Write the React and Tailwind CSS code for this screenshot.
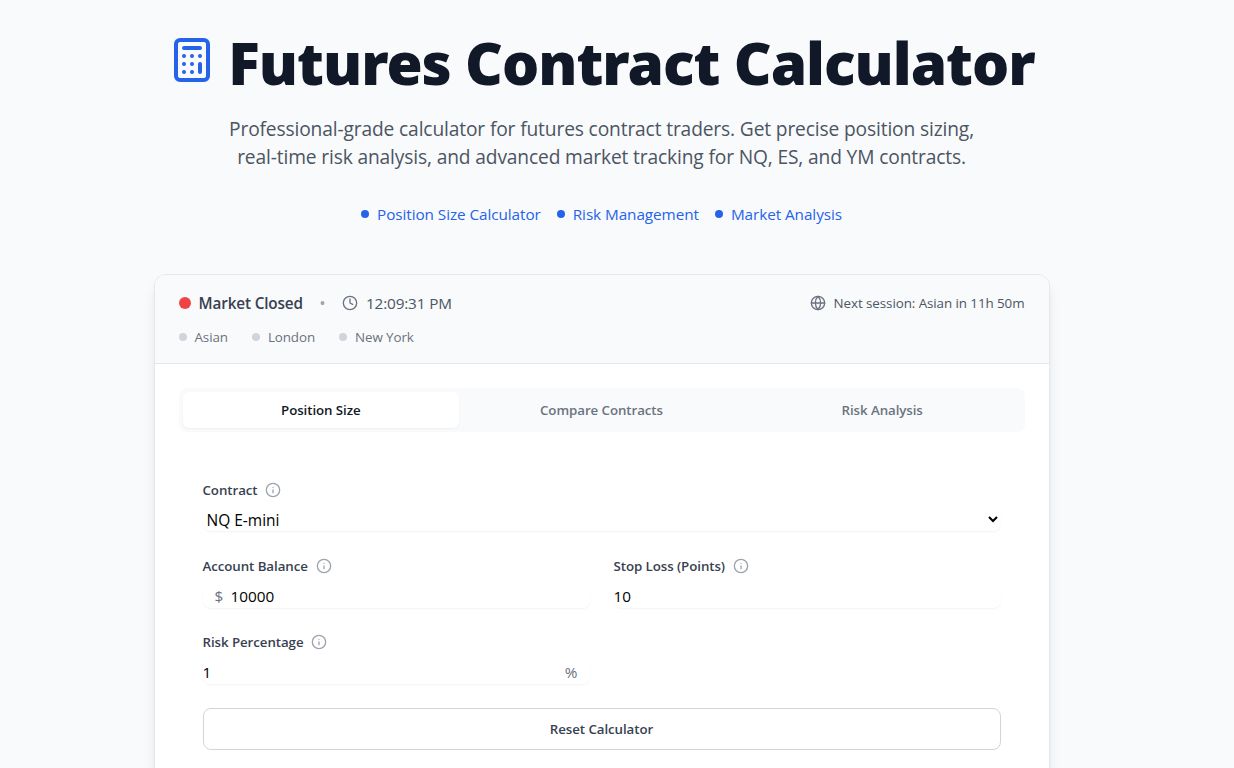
import { useState } from "react";
import { Calculator, Clock, Globe, Info } from "lucide-react";

const features = ["Position Size Calculator", "Risk Management", "Market Analysis"];
const sessions = ["Asian", "London", "New York"];
const tabs = ["Position Size", "Compare Contracts", "Risk Analysis"];
const contracts = ["NQ E-mini", "ES E-mini", "YM E-mini"];

const defaults = { contract: "NQ E-mini", balance: "10000", stopLoss: "10", risk: "1" };

function Field({ id, label, children }) {
  return (
    <div>
      <label
        htmlFor={id}
        className="mb-2 flex h-5 items-center text-[13.3px] leading-5 font-semibold tracking-[-0.07px] text-[#374151]"
      >
        {label}
        <Info className="ml-[7.8px] h-4 w-4 text-[#9ca3af]" />
      </label>
      {children}
    </div>
  );
}

export default function App() {
  const [activeTab, setActiveTab] = useState(tabs[0]);
  const [form, setForm] = useState(defaults);

  const update = (key) => (e) => setForm({ ...form, [key]: e.target.value });

  return (
    <div className="h-screen overflow-hidden bg-[#f9fafb] pr-[31px] font-['Open_Sans','Noto_Sans',sans-serif]">
      <header className="pt-8 text-center">
        <h1 className="flex h-[67px] items-start justify-center font-['Noto_Sans','Open_Sans',sans-serif] text-[58.5px] leading-[61px] font-black tracking-[-1px] whitespace-nowrap text-[#111827]">
          <Calculator className="mt-1 mr-3 h-12 w-12 text-[#2563eb]" />
          Futures Contract Calculator
        </h1>
        <p className="mx-auto mt-4 w-[768px] text-[19.2px] leading-7 tracking-[-0.14px] text-[#4b5563]">
          Professional-grade calculator for futures contract traders. Get precise position sizing,
          real-time risk analysis, and advanced market tracking for NQ, ES, and YM contracts.
        </p>
        <div className="mt-[31px] flex justify-center gap-4 text-[15.3px] leading-6 tracking-[-0.07px] text-[#2563eb]">
          {features.map((name) => (
            <span key={name} className="flex items-center gap-2">
              <span className="h-2 w-2 rounded-full bg-[#2563eb]" />
              {name}
            </span>
          ))}
        </div>
      </header>

      <main className="mx-auto mt-12 h-[640px] w-[896px] overflow-hidden rounded-xl border border-[#e5e7eb] bg-white shadow-lg">
        <div className="border-b border-[#e5e7eb] bg-[#f9fafb] px-6 py-4">
          <div className="flex h-6 items-center justify-between">
            <div className="flex items-center gap-4 text-[15.3px] leading-6 tracking-[-0.14px]">
              <div className="flex items-center gap-2">
                <span className="h-3 w-3 rounded-full bg-[#ef4444]" />
                <span className="font-semibold text-[#374151]">Market Closed</span>
              </div>
              <span className="w-[7px] text-center text-[17px] text-[#9ca3af]">•</span>
              <div className="flex items-center gap-2 text-[#4b5563]">
                <Clock className="h-4 w-4 text-[#6b7280]" />
                {"12:09:31 PM"}
              </div>
            </div>
            <div className="flex items-center gap-2 text-[13.4px] leading-5 tracking-[-0.08px] text-[#4b5563]">
              <Globe className="h-4 w-4 text-[#6b7280]" />
              Next session: Asian in 11h 50m
            </div>
          </div>
          <div className="mt-3 flex items-center gap-6 text-[13.4px] leading-5 tracking-[-0.1px] text-[#6b7280]">
            {sessions.map((name) => (
              <span key={name} className="flex items-center gap-2">
                <span className="h-2 w-2 rounded-full bg-[#d1d5db]" />
                {name}
              </span>
            ))}
          </div>
        </div>

        <div className="p-6">
          <div className="grid grid-cols-3 gap-1 rounded-lg bg-[#f9fafb] p-1">
            {tabs.map((tab) => (
              <button
                key={tab}
                type="button"
                onClick={() => setActiveTab(tab)}
                className={`h-9 rounded-md text-[13.3px] leading-5 font-semibold tracking-[-0.07px] ${
                  tab === activeTab ? "bg-white text-[#111827] shadow-xs" : "text-[#6b7280]"
                }`}
              >
                {tab}
              </button>
            ))}
          </div>

          <form className="mt-6 space-y-6 p-6" onSubmit={(e) => e.preventDefault()}>
            <Field id="contract" label="Contract">
              <div className="h-6">
                <select
                  id="contract"
                  value={form.contract}
                  onChange={update("contract")}
                  className="block h-[23px] w-full rounded-lg bg-white text-[15.5px] leading-6 text-black shadow-xs"
                >
                  {contracts.map((name) => (
                    <option key={name}>{name}</option>
                  ))}
                </select>
              </div>
            </Field>

            <div className="grid grid-cols-2 gap-6">
              <Field id="balance" label="Account Balance">
                <div className="relative">
                  <span className="absolute left-3 text-[15.3px] leading-6 text-[#6b7280]">$</span>
                  <input
                    id="balance"
                    type="number"
                    value={form.balance}
                    onChange={update("balance")}
                    className="block h-6 w-full rounded-lg pl-7 text-[15.3px] leading-6 text-black shadow-xs"
                  />
                </div>
              </Field>
              <Field id="stopLoss" label="Stop Loss (Points)">
                <input
                  id="stopLoss"
                  type="number"
                  value={form.stopLoss}
                  onChange={update("stopLoss")}
                  className="block h-6 w-full rounded-lg text-[15.3px] leading-6 text-black shadow-xs"
                />
              </Field>
              <Field id="risk" label="Risk Percentage">
                <div className="relative">
                  <input
                    id="risk"
                    type="number"
                    value={form.risk}
                    onChange={update("risk")}
                    className="block h-6 w-full rounded-lg text-[15.3px] leading-6 text-black shadow-xs"
                  />
                  <span className="absolute top-0 right-3 text-[15.3px] leading-6 text-[#6b7280]">%</span>
                </div>
              </Field>
            </div>

            <button
              type="button"
              onClick={() => setForm(defaults)}
              className="h-[42px] w-full rounded-lg border border-[#d1d5db] bg-white text-[13.3px] leading-5 font-semibold tracking-[-0.07px] text-[#374151]"
            >
              Reset Calculator
            </button>
          </form>
        </div>
      </main>
    </div>
  );
}
